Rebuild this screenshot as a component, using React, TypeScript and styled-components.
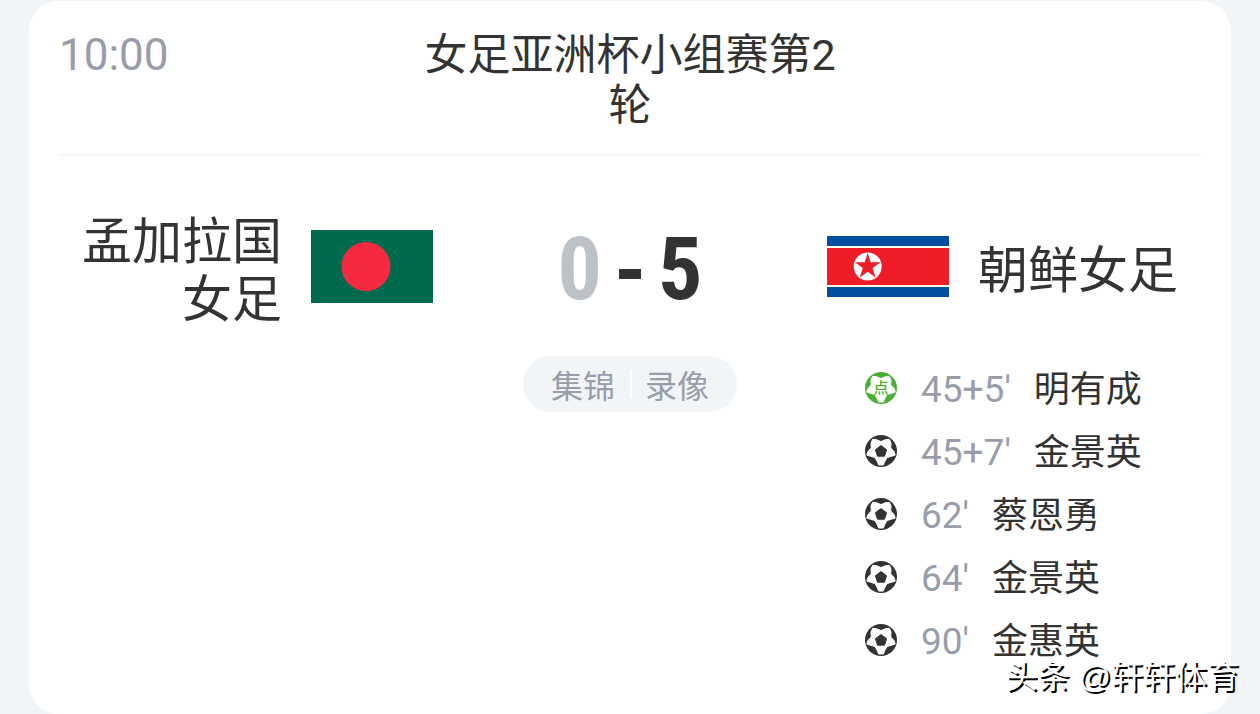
import React from 'react';
import styled, { createGlobalStyle } from 'styled-components';

const GlobalStyle = createGlobalStyle`
  *, *::before, *::after { box-sizing: border-box; }
  body {
    margin: 0;
    background: #f1f5f8;
    color: #333333;
    font-family: Roboto, "Noto Sans CJK SC", sans-serif;
  }
`;

const cjk = '"Noto Sans CJK SC", sans-serif';

const Page = styled.main`
  position: relative;
  padding: 1px 29px 0;
`;

const Card = styled.article`
  padding: 0 30px 43px;
  border-radius: 30px;
  background: #ffffff;
`;

const Header = styled.header`
  display: grid;
  grid-template-columns: minmax(0, 1fr) 420px minmax(0, 1fr);
  padding: 29px 0 24px;
  border-bottom: 2px solid #f8f8f9;
`;

const Kickoff = styled.time`
  font-size: 44px;
  line-height: 50px;
  color: #999dab;
`;

const Title = styled.h1`
  margin: 0;
  font-size: 43px;
  font-weight: 400;
  line-height: 50px;
  text-align: center;
`;

const Columns = styled.div`
  display: grid;
  grid-template-columns: minmax(0, 1fr) 394px minmax(0, 1fr);
`;

const MatchRow = styled(Columns)`
  align-items: center;
  padding-top: 52px;
`;

const Team = styled.div`
  display: flex;
  align-items: center;
  gap: 29px;
`;

const TeamName = styled.h2<{ $align: 'left' | 'right' }>`
  flex: 1;
  margin: 0;
  font-family: ${cjk};
  font-size: 50px;
  font-weight: 400;
  line-height: 58px;
  text-align: ${(p) => p.$align};
`;

const Flag = styled.svg`
  flex: none;
  width: 122px;
`;

const Score = styled.div`
  display: flex;
  align-items: center;
  justify-content: center;
  gap: 17px;
  padding-top: 6px;
  font-family: "Roboto Condensed", Roboto, sans-serif;
  font-size: 88px;
  font-weight: 700;
  line-height: 96px;
`;

const Points = styled.span<{ $losing?: boolean }>`
  color: ${(p) => (p.$losing ? '#bdc2c8' : '#333333')};
`;

const Dash = styled.span`
  width: 22px;
  height: 10px;
  margin-top: 10px;
  background: #333333;
`;

const DetailRow = styled(Columns)`
  align-items: start;
  padding-top: 32px;
`;

const Media = styled.nav`
  grid-column: 2;
  justify-self: center;
  display: flex;
  align-items: center;
  height: 56px;
  padding: 0 13px;
  border-radius: 28px;
  background: #f1f5f8;
`;

const MediaButton = styled.button`
  padding: 0 15px;
  border: 0;
  background: none;
  color: #999dab;
  font-family: ${cjk};
  font-size: 32px;
  line-height: 56px;
  cursor: pointer;

  & + & { position: relative; }
  & + &::before {
    content: "";
    position: absolute;
    left: 0;
    top: 14px;
    width: 2px;
    height: 28px;
    background: #ffffff;
  }
`;

const Goals = styled.ul`
  grid-column: 3;
  margin: 0;
  padding: 0 0 0 38px;
  list-style: none;
`;

const Goal = styled.li`
  display: flex;
  align-items: center;
  height: 63px;
  white-space: nowrap;
`;

const Ball = styled.svg`
  flex: none;
  width: 32px;
  height: 32px;
  margin-right: 24px;
`;

const BallText = styled.text`
  font-family: ${cjk};
  font-size: 15px;
  font-weight: 500;
  text-anchor: middle;
`;

const GoalText = styled.p`
  display: flex;
  align-items: baseline;
  gap: 23px;
  margin: 0;
  font-family: ${cjk};
  font-size: 36px;
  line-height: 63px;
`;

const Minute = styled.span`
  font-family: Roboto, sans-serif;
  font-size: 37px;
  color: #999dab;
`;

const Watermark = styled.p`
  position: absolute;
  right: 21px;
  bottom: 13px;
  margin: 0;
  color: #ffffff;
  font-family: "Liberation Sans", "Noto Sans CJK SC", sans-serif;
  font-size: 32px;
  line-height: 48px;
  text-shadow: 2px 2px 0 #000000;
`;

const goals = [
  { minute: "45+5'", player: '明有成', penalty: true },
  { minute: "45+7'", player: '金景英' },
  { minute: "62'", player: '蔡恩勇' },
  { minute: "64'", player: '金景英' },
  { minute: "90'", player: '金惠英' },
];

function BallIcon({ penalty }: { penalty?: boolean }) {
  const color = penalty ? '#4caf35' : '#333333';
  return (
    <Ball viewBox="0 0 32 32" role="img" aria-label={penalty ? '点球' : '进球'}>
      <circle cx="16" cy="16" r="16" fill={color} />
      <path
        d="M7.6 4.4 L11.2 4.6 L16 6.6 L20.8 4.6 L24.4 4.4 L26 8.1 L25.7 13 L29 16.4 L30.2 20.1 L26.5 21.2 L22 22.6 L19.6 26.8 L18.4 30 H13.6 L12.4 26.8 L10 22.6 L5.5 21.2 L1.8 20.1 L3 16.4 L6.3 13 L6 8.1 Z"
        fill="#ffffff"
        stroke="#ffffff"
        strokeWidth="1"
        strokeLinejoin="round"
      />
      {penalty ? (
        <BallText x="16" y="21" fill={color}>点</BallText>
      ) : (
        <path
          d="M16 10.6 L21.6 14.7 L19.5 21.2 H12.5 L10.4 14.7 Z"
          fill={color}
          stroke={color}
          strokeWidth="1"
          strokeLinejoin="round"
        />
      )}
    </Ball>
  );
}

export default function App() {
  return (
    <>
      <GlobalStyle />
      <Page>
        <Card>
          <Header>
            <Kickoff>10:00</Kickoff>
            <Title>女足亚洲杯小组赛第2轮</Title>
          </Header>
          <MatchRow>
            <Team>
              <TeamName $align="right">孟加拉国女足</TeamName>
              <Flag viewBox="0 0 122 73" aria-hidden="true">
                <rect width="122" height="73" fill="#006a4e" />
                <circle cx="55" cy="36.5" r="24.5" fill="#f42a41" />
              </Flag>
            </Team>
            <Score>
              <Points $losing>0</Points>
              <Dash role="img" aria-label="比" />
              <Points>5</Points>
            </Score>
            <Team>
              <Flag viewBox="0 0 122 61" aria-hidden="true">
                <rect width="122" height="61" fill="#ffffff" />
                <rect width="122" height="10" fill="#024fa2" />
                <rect y="51" width="122" height="10" fill="#024fa2" />
                <rect y="12" width="122" height="37" fill="#ed1c27" />
                <circle cx="40.7" cy="30.5" r="14" fill="#ffffff" />
                <path
                  d="M40.7 17 L43.7 26.3 H53.5 L45.6 32.1 L48.6 41.4 L40.7 35.7 L32.8 41.4 L35.8 32.1 L27.9 26.3 H37.7 Z"
                  fill="#ed1c27"
                />
              </Flag>
              <TeamName $align="left">朝鲜女足</TeamName>
            </Team>
          </MatchRow>
          <DetailRow>
            <Media>
              <MediaButton type="button">集锦</MediaButton>
              <MediaButton type="button">录像</MediaButton>
            </Media>
            <Goals>
              {goals.map((g) => (
                <Goal key={g.minute}>
                  <BallIcon penalty={g.penalty} />
                  <GoalText>
                    <Minute>{g.minute}</Minute>
                    <span>{g.player}</span>
                  </GoalText>
                </Goal>
              ))}
            </Goals>
          </DetailRow>
        </Card>
        <Watermark>头条 @轩轩体育</Watermark>
      </Page>
    </>
  );
}
